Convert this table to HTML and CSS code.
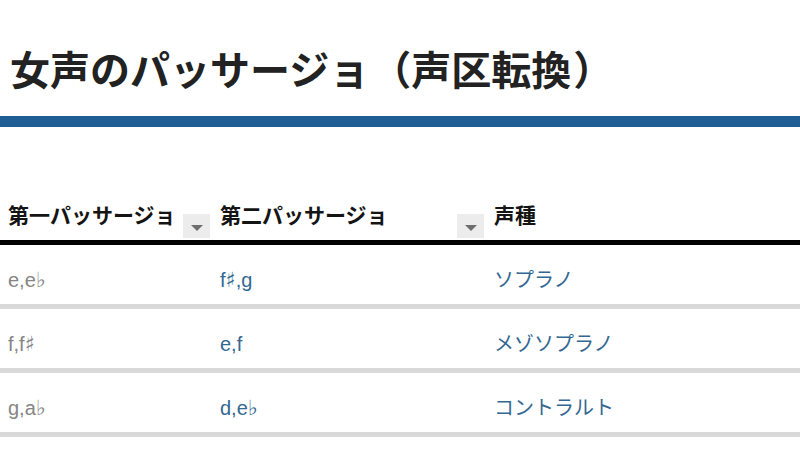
FILE: index.html
```html
<!DOCTYPE html>
<html lang="ja">
<head>
<meta charset="utf-8">
<title>女声のパッサージョ</title>
<link rel="stylesheet" href="styles.css">
</head>
<body>
<h1 class="title">女声のパッサージョ<span class="paren-open">（</span>声区転換<span class="paren-close">）</span></h1>
<table class="passaggio">
  <colgroup>
    <col class="c1"><col class="c2"><col class="c3">
  </colgroup>
  <thead>
    <tr>
      <th><div class="th-inner"><span class="th-label">第一パッサージョ</span><span class="sort"></span></div></th>
      <th><div class="th-inner"><span class="th-label">第二パッサージョ</span><span class="sort"></span></div></th>
      <th><div class="th-inner"><span class="th-label">声種</span></div></th>
    </tr>
  </thead>
  <tbody>
    <tr><td class="first">e,e<span class="acc">♭</span></td><td class="blue">f<span class="acc">♯</span>,g</td><td class="blue">ソプラノ</td></tr>
    <tr><td class="first">f,f<span class="acc">♯</span></td><td class="blue">e,f</td><td class="blue">メゾソプラノ</td></tr>
    <tr><td class="first">g,a<span class="acc">♭</span></td><td class="blue">d,e<span class="acc">♭</span></td><td class="blue">コントラルト</td></tr>
  </tbody>
</table>
</body>
</html>
```

FILE: styles.css
```css
html, body {
  margin: 0;
  padding: 0;
  background: #ffffff;
}
body {
  font-family: "Liberation Sans", "Noto Sans CJK JP", sans-serif;
}
.title {
  margin: 44px 0 0 0;
  padding: 0 8px 24px 10px;
  font-family: "Noto Sans CJK JP", sans-serif;
  font-weight: 700;
  font-size: 40px;
  line-height: 48px;
  color: #222222;
  border-bottom: 11px solid #1f5e95;
}
.paren-open,
.paren-close {
  display: inline-block;
  width: 1.05em;
}
.paren-open { text-align: right; }
.paren-close { text-align: left; padding-left: 0.05em; }
.passaggio {
  margin-top: 72px;
  width: 800px;
  border-collapse: collapse;
  table-layout: fixed;
}
.c1 { width: 212px; }
.c2 { width: 274px; }
.c3 { width: 314px; }
.passaggio th {
  padding: 0 2px 2px 8px;
  text-align: left;
  vertical-align: top;
  border-bottom: 5px solid #000000;
}
.th-inner {
  display: flex;
  justify-content: space-between;
  align-items: flex-start;
}
.th-label {
  font-family: "Noto Sans CJK JP", sans-serif;
  font-weight: 700;
  font-size: 21px;
  line-height: 30px;
  color: #141414;
  white-space: nowrap;
}
.sort {
  margin-top: 15px;
  width: 27px;
  height: 24px;
  background: #ececec;
  display: flex;
  align-items: center;
  justify-content: center;
}
.sort::after {
  content: "";
  width: 0;
  height: 0;
  border-left: 6px solid transparent;
  border-right: 6px solid transparent;
  border-top: 6px solid #6e6e6e;
  margin-top: 3px;
}
.passaggio td {
  padding: 23px 8px 12px 8px;
  font-size: 20px;
  line-height: 24px;
  border-bottom: 5px solid #d9d9d9;
  white-space: nowrap;
}
.first { color: #858585; }
.blue { color: #336892; }
.acc {
  font-family: "DejaVu Sans", sans-serif;
  font-size: 21px;
  line-height: 1;
}
```
